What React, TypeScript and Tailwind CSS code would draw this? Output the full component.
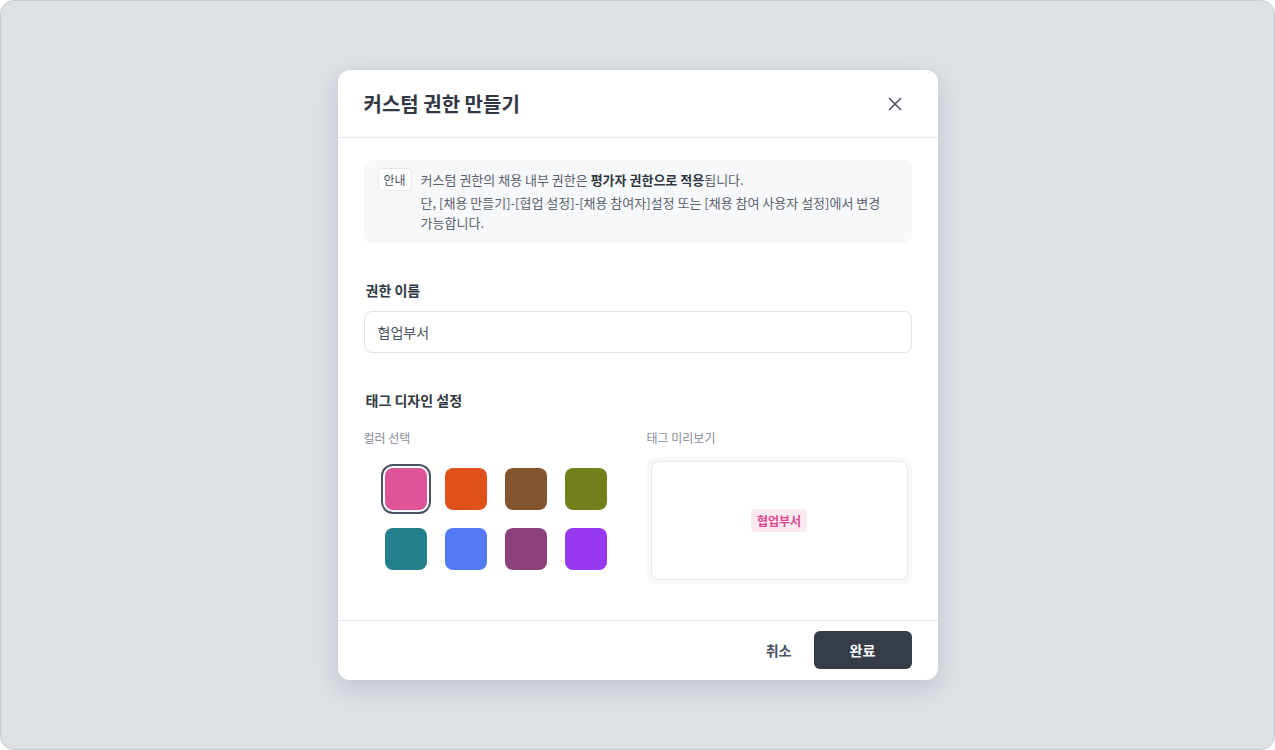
import React from "react";

const swatches = [
  "#e05398",
  "#df511b",
  "#83552e",
  "#737f1b",
  "#237f8b",
  "#537af2",
  "#8c417c",
  "#9639ee",
];

export default function App() {
  return (
    <div
      className="w-[1275px] h-[750px] bg-white"
      style={{ fontFamily: '"Noto Sans CJK KR", "Noto Sans", sans-serif' }}
    >
      <div className="w-full h-full rounded-[14px] border border-[#c6cbd2] bg-[#dde0e5] flex items-center justify-center">
        <div className="w-[600px] h-[610px] bg-white rounded-[12px] shadow-[0_8px_24px_rgba(20,30,50,0.14)] flex flex-col">
          {/* Header */}
          <div className="h-[68px] shrink-0 flex items-center justify-between pl-[26px] pr-[35px] border-b border-[#e8eaee]">
            <h1 className="text-[20px] font-bold text-[#323843] leading-none">커스텀 권한 만들기</h1>
            <svg width="16" height="16" viewBox="0 0 16 16" fill="none">
              <path d="M2.5 2.5L13.5 13.5M13.5 2.5L2.5 13.5" stroke="#4b5260" strokeWidth="1.6" strokeLinecap="round" />
            </svg>
          </div>

          {/* Body */}
          <div className="flex-1 px-[26px] pt-[22px]">
            <div className="bg-[#f7f8fa] rounded-[8px] pt-[8px] pb-[10px] pl-[14px] pr-[14px] flex gap-[9px]">
              <div className="shrink-0 h-[23px] px-[5px] bg-white border border-[#e6e8ec] rounded-[4px] text-[12px] text-[#4b5260] flex items-center">
                안내
              </div>
              <div className="text-[13px] text-[#5b616d] break-keep">
                <p className="leading-[23px]">
                  커스텀 권한의 채용 내부 권한은 <span className="font-bold text-[#323843]">평가자 권한으로 적용</span>됩니다.
                </p>
                <p className="leading-[20px] mt-[2px]">
                  단, [채용 만들기]-[협업 설정]-[채용 참여자]설정 또는 [채용 참여 사용자 설정]에서 변경 가능합니다.
                </p>
              </div>
            </div>

            <div className="mt-[37px] text-[14px] font-bold text-[#323843] leading-[20px] pl-[2px]">권한 이름</div>
            <div className="mt-[11px] h-[42px] rounded-[8px] border border-[#e3e5ea] px-[13px] flex items-center text-[14px] text-[#4b5260]">
              협업부서
            </div>

            <div className="mt-[37px] text-[14px] font-bold text-[#323843] leading-[20px] pl-[2px]">태그 디자인 설정</div>

            <div className="mt-[19px] grid grid-cols-2 gap-[18px]">
              <div>
                <div className="text-[12px] text-[#878d98] leading-[18px]">컬러 선택</div>
                <div className="mt-[21px] grid grid-cols-[repeat(4,42px)] gap-[18px] justify-center">
                  {swatches.map((c, i) => (
                    <div
                      key={c}
                      className={
                        "w-[42px] h-[42px] rounded-[8px] " +
                        (i === 0 ? "ring-2 ring-[#4a5263] ring-offset-2 ring-offset-white" : "")
                      }
                      style={{ backgroundColor: c }}
                    />
                  ))}
                </div>
              </div>
              <div>
                <div className="text-[12px] text-[#878d98] leading-[18px]">태그 미리보기</div>
                <div className="mt-[10px] h-[127px] rounded-[10px] bg-[#f7f8fa] p-[4px]">
                  <div className="h-full rounded-[8px] bg-white border border-[#e6e8ec] flex items-center justify-center">
                    <span className="px-[6px] h-[23px] flex items-center rounded-[4px] bg-[#fce8f1] text-[12px] font-bold text-[#e0468f]">
                      협업부서
                    </span>
                  </div>
                </div>
              </div>
            </div>
          </div>

          {/* Footer */}
          <div className="h-[60px] shrink-0 border-t border-[#e8eaee] flex items-start pt-[10px] justify-end gap-[22px] pr-[26px]">
            <button className="h-[38px] text-[14px] font-bold text-[#4b5260]">취소</button>
            <button className="w-[98px] h-[38px] rounded-[6px] bg-[#363c48] text-white text-[14px] font-bold">
              완료
            </button>
          </div>
        </div>
      </div>
    </div>
  );
}
